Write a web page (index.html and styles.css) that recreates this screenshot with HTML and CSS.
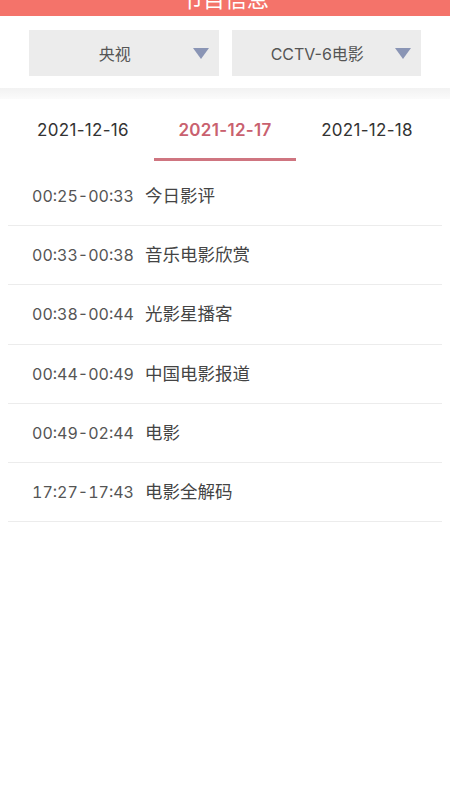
FILE: index.html
```html
<!DOCTYPE html>
<html lang="zh-CN">
<head>
    <meta charset="UTF-8">
    <meta name="viewport" content="width=device-width, initial-scale=1.0">
    <title>节目信息</title>
    <link rel="stylesheet" href="styles.css">
</head>
<body>
    <div class="header"><div class="header-title">节目信息</div></div>

    <div class="selectors">
        <div class="select">
            <span class="select-text">央视</span>
            <svg class="select-arrow" width="16" height="11" viewBox="0 0 16 11"><polygon points="0,0 16,0 8,11" fill="#8a95b5"/></svg>
        </div>
        <div class="select">
            <span class="select-text">CCTV-6电影</span>
            <svg class="select-arrow" width="16" height="11" viewBox="0 0 16 11"><polygon points="0,0 16,0 8,11" fill="#8a95b5"/></svg>
        </div>
    </div>

    <div class="divider"></div>

    <div class="tabs">
        <div class="tab">2021-12-16</div>
        <div class="tab active">2021-12-17</div>
        <div class="tab">2021-12-18</div>
    </div>

    <ul class="programs">
        <li><span class="time">00:25-00:33</span><span class="name">今日影评</span></li>
        <li><span class="time">00:33-00:38</span><span class="name">音乐电影欣赏</span></li>
        <li><span class="time">00:38-00:44</span><span class="name">光影星播客</span></li>
        <li><span class="time">00:44-00:49</span><span class="name">中国电影报道</span></li>
        <li><span class="time">00:49-02:44</span><span class="name">电影</span></li>
        <li><span class="time">17:27-17:43</span><span class="name">电影全解码</span></li>
    </ul>
</body>
</html>
```

FILE: styles.css
```css
body {
    margin: 0;
    background: #ffffff;
    font-family: Inter, "Noto Sans CJK SC", sans-serif;
    color: #444444;
}
.header {
    height: 16px;
    background: #f4736a;
    overflow: hidden;
}
.header-title {
    margin-top: -17px;
    line-height: 32px;
    font-size: 22px;
    color: #ffffff;
    text-align: center;
}
.selectors {
    display: flex;
    gap: 13px;
    padding: 14px 29px 0;
}
.select {
    flex: 1;
    height: 46px;
    background: #ececec;
    display: flex;
    align-items: center;
    padding-left: 8px;
}
.select-text {
    flex: 1;
    text-align: center;
    font-size: 16px;
    color: #555555;
}
.select-arrow {
    margin-right: 10px;
}
.divider {
    margin-top: 12px;
    height: 11px;
    background: linear-gradient(#f2f2f2, #fbfbfb);
}
.tabs {
    display: flex;
    padding: 0 12px;
}
.tab {
    flex: 1;
    height: 59px;
    line-height: 62px;
    text-align: center;
    font-size: 17px;
    letter-spacing: 0.3px;
    color: #333333;
    border-bottom: 3px solid transparent;
}
.tab.active {
    color: #c9616f;
    font-weight: 600;
    border-bottom-color: #cf7580;
}
.programs {
    list-style: none;
    margin: 0 8px;
    padding: 6px 0 0;
}
.programs li {
    height: 58.2px;
    line-height: 58px;
    padding-left: 24px;
    border-bottom: 1px solid #ececec;
}
.time {
    font-size: 16px;
    font-variant-numeric: tabular-nums;
    color: #555555;
    margin-right: 11px;
}
.name {
    font-size: 17.5px;
    color: #444444;
}
```
